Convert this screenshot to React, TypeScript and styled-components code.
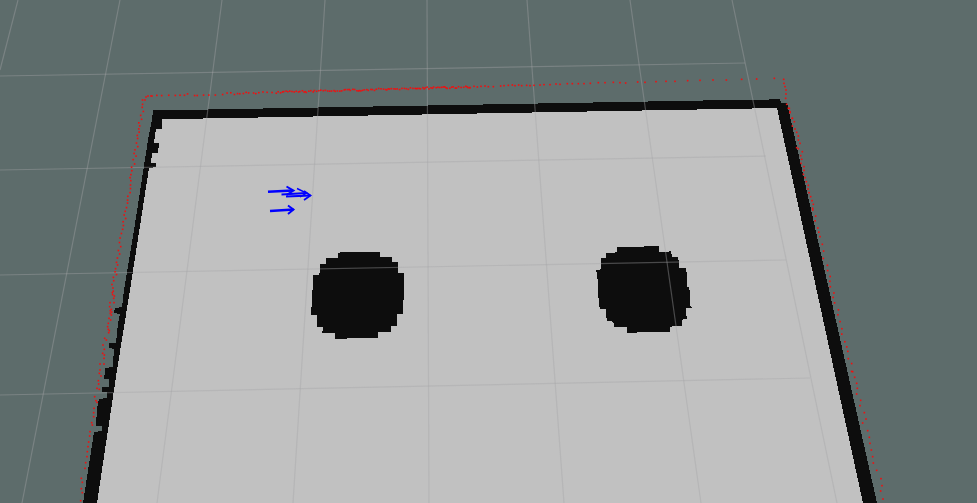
import React from "react";
import styled, { createGlobalStyle } from "styled-components";

const GlobalStyle = createGlobalStyle`
  html, body { margin: 0; padding: 0; background: #5d6c6b; overflow: hidden; }
`;

const Viewport = styled.main`
  width: 977px;
  height: 503px;
  background: #5d6c6b;
  overflow: hidden;
`;

const Scene = styled.svg`
  display: block;
  width: 977px;
  height: 503px;
`;

const Wall = styled.polygon`
  fill: #0d0d0d;
  shape-rendering: crispEdges;
`;

const Floor = styled.polygon`
  fill: #c1c1c1;
  shape-rendering: crispEdges;
`;

const GridLine = styled.line`
  stroke: #a6a6a8;
  stroke-opacity: 0.4;
  stroke-width: 1.2;
`;

const ScanDot = styled.rect`
  fill: #f01010;
`;

const PoseArrow = styled.polyline`
  fill: none;
  stroke: #0000ff;
  stroke-width: ${(p: { $w: number }) => p.$w};
`;

type P = [number, number];

const toStr = (pts: P[]) => pts.map(([x, y]) => `${x},${y}`).join(" ");
const fromZoom = (ox: number, oy: number, pts: P[]): P[] =>
  pts.map(([x, y]) => [ox + x / 3, oy + y / 3]);

const topOuter: P[] = [];
for (let i = 0; i < 11; i++) {
  const x = 153 + i * 55;
  topOuter.push([x, 110 - i], [x + 55, 110 - i]);
}
topOuter.push([780, 99]);

const innerTop: P[] = [
  [777, 108], [752, 108], [752, 109], [697, 109], [697, 110], [642, 110], [642, 111],
  [587, 111], [587, 112], [532, 112], [532, 113], [477, 113], [477, 114], [422, 114],
  [422, 115], [368, 115], [368, 116], [313, 116], [313, 117], [258, 117], [258, 118],
  [203, 118], [203, 119], [162, 119],
];

const outerPts: P[] = [
  [83, 503], [94, 432], [102, 431], [102, 426], [96, 426], [97, 408], [99, 399], [107, 398],
  [107, 392], [101.5, 392], [101.5, 387], [109, 387], [109, 379], [104, 379], [105.5, 368],
  [112.7, 367], [114, 349], [109, 348], [109, 343], [116, 343], [118, 323], [120, 314],
  [114, 313], [115, 308], [122, 307], [124, 290], [134, 230], [148, 140], [152, 120],
  ...topOuter, [781, 103], [787, 103], [877, 503],
];

const innerPts: P[] = [
  [97, 503], [117, 370], [130, 290], [149, 168], [156, 167], [156, 163], [151, 163],
  [152, 153], [158, 153], [159, 143], [154, 143], [156, 129], [162, 129],
  ...innerTop.slice().reverse(), [863, 503],
];

const blobA = fromZoom(300, 240, [
  [120, 36], [240, 36], [240, 52], [276, 52], [276, 67], [294, 67], [294, 99], [312, 99],
  [312, 180], [308, 180], [308, 222], [291, 222], [291, 258], [273, 258], [273, 275],
  [234, 275], [234, 293], [141, 293], [141, 296], [105, 296], [105, 279], [66, 279],
  [66, 273], [69, 273], [69, 261], [51, 261], [51, 225], [33, 225], [33, 201], [36, 201],
  [36, 150], [39, 150], [39, 105], [57, 105], [57, 99], [60, 99], [60, 72], [78, 72],
  [78, 55], [114, 55], [114, 39], [120, 39],
]);

const blobB = fromZoom(585, 235, [
  [97, 37], [177, 37], [177, 33], [222, 33], [222, 50], [240, 50], [240, 52], [258, 48],
  [261, 67], [280, 67], [282, 98], [302, 98], [305, 115], [307, 155], [312, 155], [315, 175],
  [316, 213], [320, 218], [303, 218], [305, 252], [290, 254], [290, 272], [255, 275],
  [255, 290], [156, 290], [156, 294], [126, 294], [126, 277], [87, 275], [85, 260], [65, 258],
  [63, 222], [45, 222], [42, 210], [40, 180], [37, 120], [33, 105], [48, 103], [48, 70],
  [63, 68], [63, 55], [97, 52],
]);

const gridLines: [number, number, number, number][] = [
  [18, 0, 0, 70],
  [120, 0, 22, 503],
  [222, 0, 157, 503],
  [325, 0, 293, 503],
  [427, 0, 429, 503],
  [527, 0, 564, 503],
  [630, 0, 701, 503],
  [732, 0, 837, 503],
  [0, 76, 745, 63],
  [0, 170, 766, 156],
  [0, 275, 786, 260],
  [0, 395, 810, 378],
];

let seed = 1337;
const rnd = () => {
  seed = (seed * 16807) % 2147483647;
  return seed / 2147483647;
};

const scan: P[] = [];

// left side, upper part
for (let y = 100; y < 292; y += 2.6 + rnd() * 2) {
  const x = y < 228 ? 144 - (y - 100) * 0.163 : 123 - (y - 228) * 0.169;
  scan.push([x + (rnd() - 0.5) * 3, y]);
}
scan.push([145, 100], [146, 97], [148, 96], [151, 96]);

// top side, dense part
for (let x = 152; x < 470; ) {
  scan.push([x, 96 - 0.0285 * (x - 148) + (rnd() - 0.5) * 2]);
  x += x < 230 ? 2.5 + rnd() * 5 : x < 275 ? 2 + rnd() * 3 : 1 + rnd() * 1.6;
}

// right side, middle part
for (let y = 210; y < 372; y += 4 + rnd() * 4) {
  scan.push([787 + 0.244 * (y - 104) + (rnd() - 0.5) * 3, y]);
}

scan.push(
  ...fromZoom(70, 290, [
    [127, 8], [128, 14], [133, 18], [131, 25], [120, 38], [132, 38], [119, 50], [124, 58],
    [121, 62], [125, 66], [121, 70], [124, 75], [117, 85], [122, 90], [115, 100], [113, 110],
    [115, 118], [118, 122], [116, 128], [104, 145], [109, 150], [99, 165], [103, 178], [98, 190],
    [103, 195], [102, 205], [90, 222], [102, 222], [90, 240], [88, 250], [93, 258], [85, 272],
    [86, 282], [81, 295], [88, 298], [74, 320], [78, 332], [81, 337], [72, 355], [71, 368],
    [71, 380], [65, 398], [67, 405], [60, 425], [59, 438], [56, 456], [54, 470], [52, 485],
    [51, 500], [47, 518], [45, 535], [34, 565], [37, 577], [34, 596], [37, 608], [32, 632],
  ]),
  ...fromZoom(470, 60, [
    [0, 83], [12, 79], [22, 81], [33, 79], [45, 78], [55, 80], [70, 80], [92, 78], [102, 77],
    [115, 76], [127, 75], [135, 77], [146, 75], [155, 77], [170, 76], [180, 77], [192, 76],
    [210, 75], [222, 74], [240, 74], [258, 72], [270, 73], [292, 71], [307, 71], [325, 71],
    [342, 71], [361, 70], [385, 68], [405, 68], [430, 67], [450, 68], [467, 69], [503, 66],
    [525, 67], [558, 65], [588, 64], [615, 64], [653, 62], [690, 61], [729, 60], [769, 60],
    [815, 58], [860, 57], [913, 55], [941, 58], [942, 70], [945, 80], [948, 90], [948, 102],
    [947, 115], [950, 133], [955, 145], [960, 158], [967, 175],
  ]),
  ...fromZoom(730, 60, [
    [178, 145], [180, 155], [187, 175], [193, 185], [187, 198], [195, 207], [200, 217],
    [205, 228], [205, 240], [210, 250], [200, 263], [205, 266], [217, 275], [212, 287],
    [215, 298], [213, 310], [222, 320], [222, 331], [220, 343], [225, 353], [229, 365],
    [235, 376], [234, 387], [237, 398], [242, 410], [246, 422], [250, 433], [248, 445],
  ]),
  ...fromZoom(820, 370, [
    [98, 5], [104, 22], [110, 40], [112, 55], [110, 72], [122, 91], [120, 107], [133, 128],
    [138, 147], [128, 159], [143, 182], [148, 202], [150, 220], [154, 240], [158, 260],
    [160, 279], [170, 301], [183, 326], [186, 347], [182, 363], [189, 387],
  ]),
);

const arrows: { shaft: P[]; head: P[]; w: number }[] = [
  { shaft: [[268, 191.7], [293, 190.6]], head: [[286.5, 186.5], [293.5, 190.6], [286.5, 195]], w: 2.5 },
  { shaft: [[281.5, 194.5], [306.5, 193]], head: [[297, 188.5], [306.5, 193], [300, 197]], w: 1.8 },
  { shaft: [[286, 196.5], [310.5, 195.5]], head: [[304, 191], [310.5, 195.5], [304, 200]], w: 2.2 },
  { shaft: [[270, 211], [293.5, 209.5]], head: [[288, 205.5], [293.5, 209.5], [288, 214]], w: 2.4 },
];

export default function App() {
  return (
    <Viewport>
      <GlobalStyle />
      <Scene viewBox="0 0 977 503" role="img" aria-label="Occupancy map with laser scan and pose arrows">
        <Wall points={toStr(outerPts)} />
        <Floor points={toStr(innerPts)} />
        <Wall points={toStr(blobA)} />
        <Wall points={toStr(blobB)} />
        {gridLines.map(([x1, y1, x2, y2]) => (
          <GridLine key={`${x1}-${y1}`} x1={x1} y1={y1} x2={x2} y2={y2} />
        ))}
        {scan.map(([x, y], i) => (
          <ScanDot key={i} x={x - 0.8} y={y - 0.8} width={1.6} height={1.6} />
        ))}
        {arrows.map((a, i) => (
          <g key={i}>
            <PoseArrow $w={a.w} points={toStr(a.shaft)} />
            <PoseArrow $w={a.w * 0.8} points={toStr(a.head)} />
          </g>
        ))}
      </Scene>
    </Viewport>
  );
}
